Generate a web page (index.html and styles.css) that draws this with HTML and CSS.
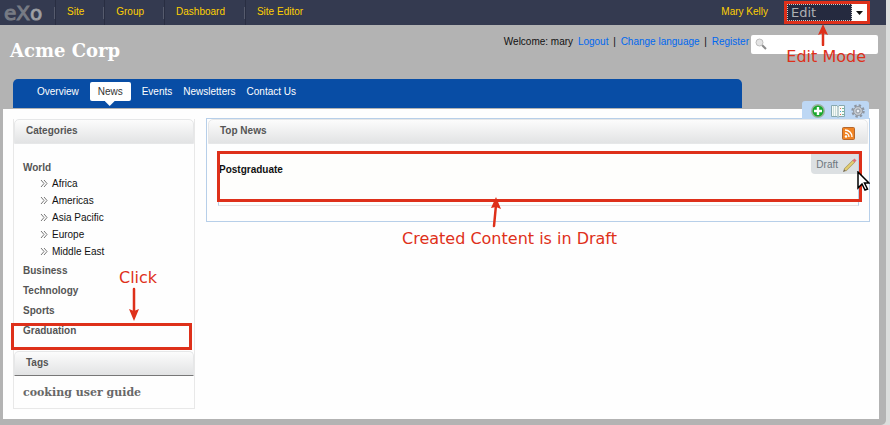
FILE: index.html
```html
<!DOCTYPE html>
<html lang="en">
<head>
<meta charset="utf-8">
<title>Acme Corp</title>
<link rel="stylesheet" href="styles.css">
</head>
<body>
<div class="page">
  <div class="topbar">
    <a class="logo" href="#">e<span class="logo-x">X</span><span class="logo-o">o</span></a>
    <nav class="admin-menu">
      <a href="#">Site</a>
      <a href="#">Group</a>
      <a href="#">Dashboard</a>
      <a href="#">Site Editor</a>
    </nav>
    <a class="user" href="#">Mary Kelly</a>
    <div class="mode">
      <select class="mode-select" aria-label="Mode"><option>Edit</option></select>
      <span class="mode-arrow"></span>
      <span class="frame mode-frame"></span>
      <svg class="arrow mode-pointer" width="12" height="22" viewBox="0 0 12 22"><path d="M6 21V7" stroke="#de301a" stroke-width="2.500" stroke-linecap="round"/><path d="M6 0l5 11-5-2-5 2z" fill="#de301a"/></svg>
      <span class="note mode-note">Edit Mode</span>
    </div>
  </div>

  <header class="header">
    <h1>Acme Corp</h1>
    <div class="account">Welcome: mary <a href="#">Logout</a> | <a href="#">Change language</a> | <a href="#">Register</a></div>
    <div class="search">
      <svg width="12" height="12" viewBox="0 0 12 12"><path d="M7 7l4 4" stroke="#8b8b8b" stroke-width="2"/><circle cx="4.500" cy="4.500" r="3.500" fill="#e4e4e4" stroke="#bcbcbc"/></svg>
      <input type="text" aria-label="Search">
    </div>
  </header>

  <nav class="site-nav">
    <a href="#">Overview</a>
    <a class="current" href="#">News</a>
    <a href="#">Events</a>
    <a href="#">Newsletters</a>
    <a href="#">Contact Us</a>
  </nav>

  <main class="content">
    <aside class="sidebar">
      <h2 class="bar">Categories</h2>
      <ul class="categories">
        <li><a href="#">World</a>
          <ul class="regions">
            <li><svg width="8" height="7" viewBox="0 0 8 7"><path d="M1 0l3 3.500-3 3.500M4 0l3 3.500-3 3.500"/></svg><a href="#">Africa</a></li>
            <li><svg width="8" height="7" viewBox="0 0 8 7"><path d="M1 0l3 3.500-3 3.500M4 0l3 3.500-3 3.500"/></svg><a href="#">Americas</a></li>
            <li><svg width="8" height="7" viewBox="0 0 8 7"><path d="M1 0l3 3.500-3 3.500M4 0l3 3.500-3 3.500"/></svg><a href="#">Asia Pacific</a></li>
            <li><svg width="8" height="7" viewBox="0 0 8 7"><path d="M1 0l3 3.500-3 3.500M4 0l3 3.500-3 3.500"/></svg><a href="#">Europe</a></li>
            <li><svg width="8" height="7" viewBox="0 0 8 7"><path d="M1 0l3 3.500-3 3.500M4 0l3 3.500-3 3.500"/></svg><a href="#">Middle East</a></li>
          </ul>
        </li>
        <li><a href="#">Business</a></li>
        <li><a href="#">Technology</a></li>
        <li><a href="#">Sports</a></li>
        <li class="marked"><a href="#">Graduation</a>
          <span class="frame graduation-frame"></span>
          <span class="note click-note">Click</span>
          <svg class="arrow click-pointer" width="12" height="34" viewBox="0 0 12 34"><path d="M6 2v22" stroke="#de301a" stroke-width="2.500" stroke-linecap="round"/><path d="M6 34L1 22l5 2 5-2z" fill="#de301a"/></svg>
        </li>
      </ul>
      <h2 class="bar tags-bar">Tags</h2>
      <div class="tags"><a href="#">cooking</a> <a href="#">user guide</a></div>
    </aside>

    <section class="news">
      <div class="tools">
        <button type="button" aria-label="Add content"><svg width="16" height="16" viewBox="0 0 16 16"><circle cx="8" cy="8" r="7" fill="#9ab39f"/><circle cx="8" cy="8" r="5.500" fill="#19a82c"/><path d="M8 4v8M4 8h8" stroke="#fff" stroke-width="2.400"/></svg></button>
        <button type="button" aria-label="Manage content"><svg width="16" height="16" viewBox="0 0 16 16"><path d="M1.500 2.500H7l1 1 1-1h5.500v11H9l-1 1-1-1H1.500z" fill="#f6faf7" stroke="#87a8ae"/><path d="M8 3v11" stroke="#87a8ae"/><path d="M3.500 3v10M5.500 3v10" stroke="#ccdedb"/><path d="M10 5.500h1M10 11.500h1" stroke="#e66b58"/><path d="M10 8.500h1" stroke="#4a9fe0"/><path d="M12 5.500h2M12 8.500h2M12 11.500h2" stroke="#73b89a"/></svg></button>
        <button type="button" aria-label="Preferences"><svg width="16" height="16" viewBox="0 0 16 16"><circle cx="8" cy="8" r="5.500" fill="none" stroke="#8e959f" stroke-width="2.400" stroke-dasharray="2.300 2.020"/><circle cx="8" cy="8" r="4.500" fill="#c5cad0" stroke="#9299a3"/><circle cx="8" cy="8" r="2" fill="#edf2f7" stroke="#8e959f"/></svg></button>
      </div>
      <div class="bar news-bar">
        <h2>Top News</h2>
        <a class="rss" href="#" aria-label="RSS"><svg width="13" height="13" viewBox="0 0 13 13"><rect x=".5" y=".5" width="12" height="12" rx="1" fill="#f08424" stroke="#b5672d"/><circle cx="4" cy="9.500" r="1.200" fill="#fff"/><path d="M3 6a4 4 0 0 1 4 4M3 3a7 7 0 0 1 7 7" fill="none" stroke="#fff" stroke-width="1.400"/></svg></a>
      </div>
      <article class="story">
        <h3>Postgraduate</h3>
        <div class="draft">Draft
          <svg width="14" height="14" viewBox="0 0 14 14"><path d="M2 12L11 3" stroke="#a8975c" stroke-width="3.200"/><path d="M2 12L11 3" stroke="#e3cf70" stroke-width="2"/><path d="M10.500 3.500L12.500 1.500" stroke="#df6e75" stroke-width="3"/><path d="M0 14l1-3 2 2z" fill="#776c50"/></svg>
        </div>
        <span class="frame story-frame"></span>
        <svg class="cursor" width="13" height="21" viewBox="0 0 13 21"><path d="M1 1v16l4-4 3 6 2.500-1-3-6H12z" fill="#fff" stroke="#000" stroke-width="1.500"/></svg>
        <svg class="arrow story-pointer" width="12" height="32" viewBox="0 0 12 32"><path d="M4 30L6 9" stroke="#de301a" stroke-width="2.500" stroke-linecap="round"/><path d="M6 1l5 12-5-2-5 1z" fill="#de301a"/></svg>
        <span class="note story-note">Created Content is in Draft</span>
      </article>
    </section>
  </main>
</div>
</body>
</html>
```
FILE: styles.css
```css
* { box-sizing: border-box; }
body {
  margin: 0;
  background: #dcdedd;
  color: #111;
  font: 10px/14px "Liberation Sans", Arial, sans-serif;
}
a { color: inherit; text-decoration: none; }
h1, h2, h3, ul { margin: 0; padding: 0; font-size: inherit; }
ul { list-style: none; }
svg { display: block; flex: none; }

.page {
  margin-right: 4px;
  padding-bottom: 6px;
  background: #b3b3b3;
  border-bottom-right-radius: 5px;
}

/* Administration bar */
.topbar {
  display: flex;
  align-items: center;
  height: 25px;
  padding: 0 19px 0 4px;
  background: #343a50;
  color: #ffd000;
}
.logo {
  width: 50px;
  color: #777b84;
  font: 20px/24px "DejaVu Sans", sans-serif;
  -webkit-text-stroke: 1px #777b84;
}
.logo-o { color: #a9abb0; -webkit-text-stroke-color: #94979d; }
.admin-menu { display: flex; flex: 1; }
.admin-menu a {
  padding: 5px 19px 6px 13px;
  background:
    linear-gradient(#565b6d, #565b6d) 0 7px / 1px 12px no-repeat,
    linear-gradient(#292e42, #292e42) 1px 0 / 1px 100% no-repeat;
}
.user { margin-right: 19px; padding-bottom: 1px; }
.mode {
  position: relative;
  display: flex;
  width: 80px;
  height: 17px;
  background: #fff;
}
.mode-select {
  width: 65px;
  appearance: none;
  margin: 0;
  padding: 0 3px;
  border: 1px dotted #ccc;
  border-radius: 0;
  background: #252a3f;
  color: #aeb0b4;
  font: 13px/15px "DejaVu Sans", sans-serif;
}
.mode-arrow {
  margin: 7px 0 0 4px;
  width: 7px;
  height: 4px;
  background: #111;
  clip-path: polygon(0 0, 100% 0, 50% 100%);
}

/* Annotations lying over the page */
.frame { position: absolute; border: 3px solid #de301a; pointer-events: none; }
.arrow { position: absolute; }
.note {
  position: absolute;
  color: #de301a;
  font: 16px/20px "DejaVu Sans", sans-serif;
  white-space: nowrap;
}
.mode-frame { inset: -3px; }
.mode-pointer { left: 30px; top: 20px; }
.mode-note { right: 1px; top: 43px; }

/* Site header */
.header {
  display: flex;
  align-items: flex-start;
  height: 54px;
  padding: 10px 8px 0 10px;
}
h1 {
  flex: 1;
  padding-top: 4px;
  color: #fff;
  font: bold 18px/24px "DejaVu Serif", serif;
}
.account a { padding: 0 2px; color: #0068f0; }
.search {
  display: flex;
  width: 127px;
  height: 19px;
  padding: 3px 4px;
  border-radius: 2px;
  background: #fff;
}
.search input { flex: 1; min-width: 0; border: 0; padding: 0 4px; outline: 0; background: none; font: inherit; }

.site-nav {
  display: flex;
  align-items: flex-start;
  gap: 11px;
  height: 29px;
  margin: 0 144px 1px 13px;
  padding: 3px 24px 0;
  border-radius: 5px 5px 0 0;
  background: #084da5;
  color: #fff;
}
.site-nav a { padding: 3px 0 2px; }
.site-nav .current {
  position: relative;
  padding: 3px 8px 2px;
  border-radius: 2px;
  background: #fff;
  color: #333;
}
.current::after {
  content: "";
  position: absolute;
  left: 15px;
  top: 19px;
  width: 10px;
  height: 5px;
  background: #fff;
  clip-path: polygon(0 0, 100% 0, 50% 100%);
}

.content {
  display: flex;
  align-items: flex-start;
  gap: 11px;
  margin: 0 7px 0 3px;
  padding: 10px 9px 10px 10px;
  background: #fefefe;
}
.bar {
  height: 25px;
  padding: 4px 11px;
  border: 1px solid #e6e7e8;
  border-radius: 5px 5px 0 0;
  background: linear-gradient(#fcfcfc, #e2e3e4);
  color: #555;
  font-weight: bold;
}

/* Sidebar */
.sidebar { width: 182px; border: solid #e8e8e8; border-width: 0 1px 1px; }
.categories { padding: 14px 9px 6px; color: #555; font-weight: bold; line-height: 20px; }
.regions { margin: -3px 0 1px; padding-left: 17px; color: #111; font-weight: normal; line-height: 17px; }
.regions li { display: flex; align-items: center; gap: 4px; }
.regions path { fill: none; stroke: #777; }
.marked { position: relative; }
.graduation-frame { left: -12px; right: -7px; top: 2px; height: 27px; }
.click-note { left: 96px; top: -53px; }
.click-pointer { left: 105px; top: -34px; }
.tags-bar { margin-top: 4px; border-bottom-color: #777; }
.tags {
  padding: 8px 9px 7px;
  color: #686868;
  font: bold 11px/17px "DejaVu Serif", serif;
}

/* News portlet */
.news { position: relative; flex: 1; margin-top: -1px; padding: 0 1px 15px; border: 1px solid #b7cfe9; }
.tools {
  position: absolute;
  right: 0;
  top: -18px;
  display: flex;
  gap: 4px;
  height: 18px;
  padding: 2px 3px 0 8px;
  border-radius: 3px 3px 0 0;
  background: #bdd7f4;
}
.tools button { display: block; height: 16px; padding: 0; border: 0; background: none; }
.news-bar { display: flex; justify-content: space-between; padding-right: 12px; }
.rss { margin-top: 3px; }
.story {
  position: relative;
  height: 54px;
  margin: 8px 9px 0 10px;
  border: solid #b7cfe9;
  border-width: 0 1px 1px;
  border-bottom-color: #e4e4e4;
  background: #fefefc;
}
.story h3 { padding-top: 11px; font-weight: bold; }
.draft {
  position: absolute;
  right: 0;
  top: 1px;
  display: flex;
  align-items: center;
  gap: 5px;
  height: 21px;
  padding: 3px 1px 0 5px;
  border-bottom-left-radius: 4px;
  background: #dce0e2;
  color: #6c767d;
}
.story-frame { left: -2px; right: -4px; top: -1px; height: 51px; }
.cursor { position: absolute; right: -12px; top: 19px; }
.story-pointer { left: 271px; top: 44px; }
.story-note { left: 183px; top: 77px; }
```
